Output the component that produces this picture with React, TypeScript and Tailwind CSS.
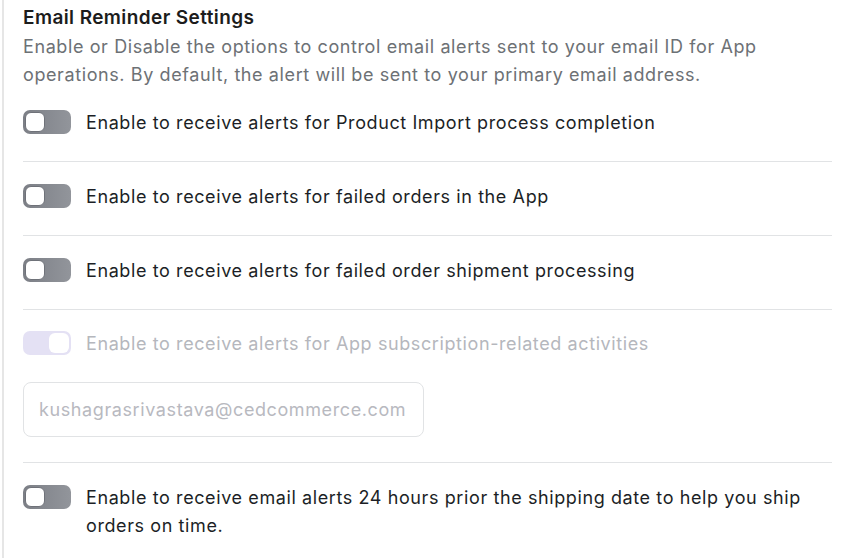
import React from "react";

function Toggle({ disabled = false }: { disabled?: boolean }) {
  if (disabled) {
    return (
      <div className="mt-[1px] flex h-[24px] w-[48px] shrink-0 items-center justify-end rounded-[7px] bg-[#e4e1f4] p-[2px]">
        <div className="h-[20px] w-[20px] rounded-[6px] bg-white" />
      </div>
    );
  }
  return (
    <div className="mt-[1px] flex h-[24px] w-[48px] shrink-0 items-center rounded-[7px] bg-gradient-to-r from-[#7c7f86] to-[#92959b] p-[2px]">
      <div className="h-[20px] w-[20px] rounded-[6px] border border-[#6f7279] bg-white" />
    </div>
  );
}

function Row({ text, disabled = false }: { text: string; disabled?: boolean }) {
  return (
    <div className="flex items-start gap-[15px]">
      <Toggle disabled={disabled} />
      <span className={disabled ? "text-[#b5b7bd]" : "text-[#1c1f26]"}>{text}</span>
    </div>
  );
}

export default function App() {
  return (
    <div
      className="h-[558px] w-[850px] overflow-hidden bg-white text-[18px] leading-[28px] tracking-[0.6px]"
      style={{ fontFamily: "Inter, 'Noto Sans', sans-serif" }}
    >
      <div className="ml-[2px] h-full border-l-2 border-[#e6e6e6] pl-[19px] pr-[18px] pt-[6px]">
        <h2 className="text-[19px] font-semibold leading-[24px] tracking-[0.4px] text-[#1c1c1c]">Email Reminder Settings</h2>
        <p className="mt-[3px] text-[#6d7175]">
          Enable or Disable the options to control email alerts sent to your email ID for App operations. By default,
          the alert will be sent to your primary email address.
        </p>
        <div className="pt-[20px] pb-[24px]">
          <Row text="Enable to receive alerts for Product Import process completion" />
        </div>
        <div className="border-t border-[#e1e3e5] pt-[21px] pb-[24px]">
          <Row text="Enable to receive alerts for failed orders in the App" />
        </div>
        <div className="border-t border-[#e1e3e5] pt-[21px] pb-[24px]">
          <Row text="Enable to receive alerts for failed order shipment processing" />
        </div>
        <div className="border-t border-[#e1e3e5] pt-[20px] pb-[25px]">
          <Row text="Enable to receive alerts for App subscription-related activities" disabled />
          <div className="mt-[24px] flex h-[55px] w-[401px] items-center rounded-[8px] border border-[#e1e3e5] px-[15px] text-[#b8b9bf]">
            kushagrasrivastava@cedcommerce.com
          </div>
        </div>
        <div className="border-t border-[#e1e3e5] pt-[21px]">
          <Row text="Enable to receive email alerts 24 hours prior the shipping date to help you ship orders on time." />
        </div>
      </div>
    </div>
  );
}
